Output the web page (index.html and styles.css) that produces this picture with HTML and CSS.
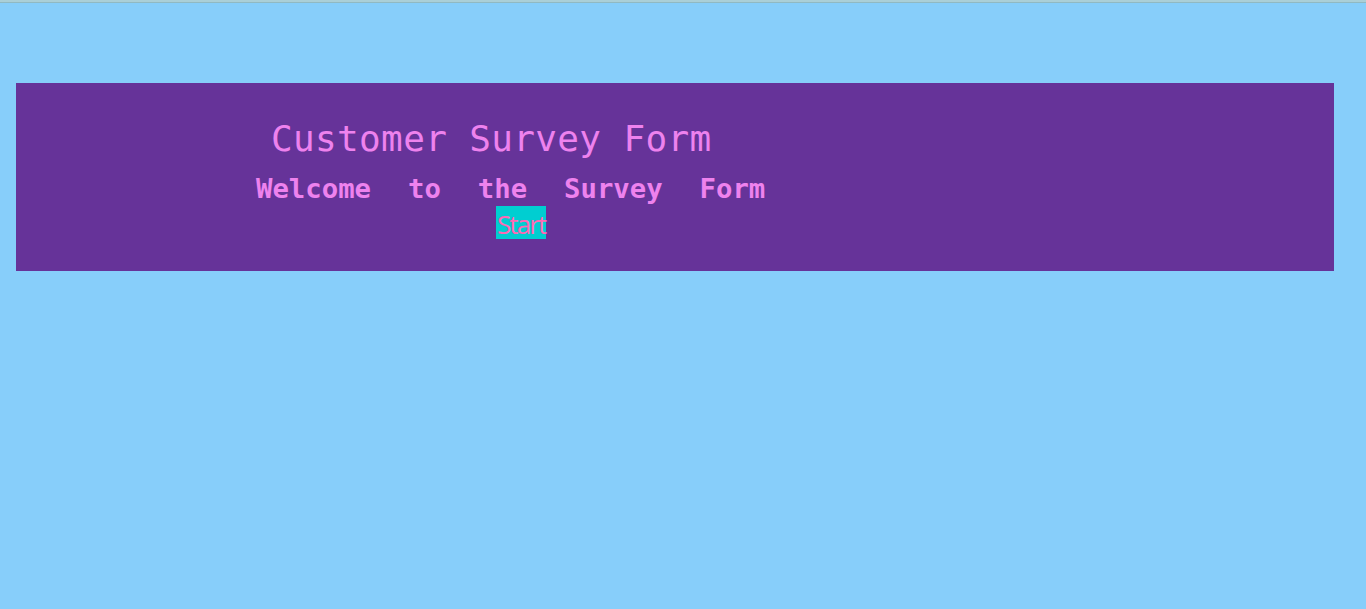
FILE: index.html
```html
<!DOCTYPE html>
<html lang="en">
<head>
<meta charset="utf-8">
<title>Customer Survey Form</title>
<link rel="stylesheet" href="styles.css">
</head>
<body>
<div class="topline"></div>
<main class="page">
  <header class="hero">
    <h1 class="title">Customer Survey Form</h1>
    <p class="subtitle">Welcome to the Survey Form</p>
    <div class="actions"><button class="start" type="button">Start</button></div>
  </header>
</main>
</body>
</html>
```

FILE: styles.css
```css
html, body {
  margin: 0;
  padding: 0;
  background: #87cefa;
  height: 100%;
}

.topline {
  height: 2px;
  background: #aacfd7;
  border-bottom: 1px solid #90b9c2;
}

.page {
  padding: 80px 32px 0 16px;
}

.hero {
  background: #663399;
  height: 188px;
  box-sizing: border-box;
  padding-top: 35px;
  color: #ee82ee;
}

.title {
  margin: 0 0 0 255px;
  font-family: "DejaVu Sans Mono", monospace;
  font-weight: normal;
  font-size: 36px;
  line-height: 42px;
  letter-spacing: 0.35px;
  white-space: pre;
}

.subtitle {
  margin: 13px 0 0 240px;
  font-family: "DejaVu Sans Mono", monospace;
  font-weight: bold;
  font-size: 27.3px;
  line-height: 31px;
  word-spacing: 20.5px;
  white-space: pre;
}

.actions {
  margin: 2px 0 0 480px;
  display: flex;
}

.start {
  margin: 0;
  border: none;
  background: #00ced1;
  color: #ff69b4;
  font-family: "Open Sans", sans-serif;
  font-size: 26px;
  line-height: 29px;
  height: 33px;
  box-sizing: border-box;
  padding: 4px 1px 0 1px;
  letter-spacing: -1.9px;
}
```
